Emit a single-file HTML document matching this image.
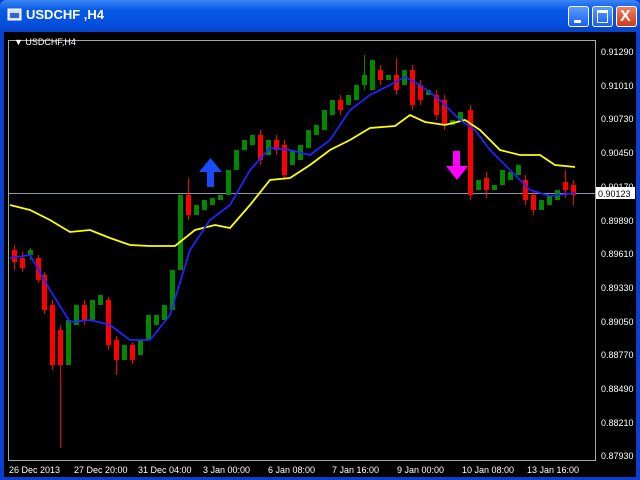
<!DOCTYPE html><html><head><style>
body{margin:0;width:640px;height:480px;overflow:hidden;background:#0a3fd0;font-family:"Liberation Sans",sans-serif}
#tb{position:absolute;left:0;top:0;width:640px;height:32px;background:linear-gradient(#3b86f5,#0a5ae6 30%,#0550e0 70%,#0444c8);border-radius:6px 6px 0 0}
#tt{position:absolute;left:26px;top:7px;color:#fff;font-weight:bold;font-size:13px}
.bt{position:absolute;top:6px;width:19px;height:19px;border:1px solid #fff;border-radius:3px;background:linear-gradient(#5a9cff,#1c5ef0)}
#main{position:absolute;left:4px;top:32px;width:632px;height:445px;background:#000}
</style></head><body>
<div id="tb"><svg style="position:absolute;left:7px;top:7px" width="16" height="16"><rect x="1" y="2" width="13" height="11" fill="#dde" stroke="#fff"/><rect x="3" y="6" width="9" height="5" fill="#36c"/></svg><div id="tt">USDCHF ,H4</div>
<div class="bt" style="left:568px"><div style="position:absolute;left:5px;top:13px;width:7px;height:3px;background:#fff"></div></div>
<div class="bt" style="left:592px"><div style="position:absolute;left:4px;top:3px;width:9px;height:9px;border:1px solid #fff;border-top-width:3px"></div></div>
<div class="bt" style="left:616px;background:linear-gradient(#f08060,#d03818)"><div style="position:absolute;left:3px;top:0;color:#fff;font-size:16px;font-weight:bold;line-height:19px">X</div></div>
</div>
<div id="main"></div>
<svg style="position:absolute;left:0;top:0" width="640" height="480" font-family="Liberation Sans" font-size="9">
<rect x="8.5" y="40.5" width="587" height="420" fill="none" stroke="#aaa"/>
<text x="14" y="45" fill="#fff" font-size="9">▼ USDCHF,H4</text>
<line x1="9" y1="193.5" x2="595" y2="193.5" stroke="#8a9aa8"/>
<g fill="#fff">
<text x="601" y="55">0.91290</text><text x="601" y="89">0.91010</text><text x="601" y="122">0.90730</text><text x="601" y="156">0.90450</text><text x="601" y="190">0.90170</text><text x="601" y="224">0.89890</text><text x="601" y="257">0.89610</text><text x="601" y="291">0.89330</text><text x="601" y="325">0.89050</text><text x="601" y="358">0.88770</text><text x="601" y="392">0.88490</text><text x="601" y="426">0.88210</text><text x="601" y="459">0.87930</text>
</g>
<rect x="596" y="187" width="39" height="12" fill="#fff"/><text x="598" y="197" fill="#000">0.90123</text>
<g fill="#fff"><text x="9" y="473">26 Dec 2013</text><text x="74" y="473">27 Dec 20:00</text><text x="138" y="473">31 Dec 04:00</text><text x="203" y="473">3 Jan 00:00</text><text x="268" y="473">6 Jan 08:00</text><text x="332" y="473">7 Jan 16:00</text><text x="397" y="473">9 Jan 00:00</text><text x="462" y="473">10 Jan 08:00</text><text x="527" y="473">13 Jan 16:00</text></g>
<g id="c"></g>
<polyline fill="none" stroke="#ff0" stroke-width="1.8" points="10,205 30,210 50,220 70,232 90,230 110,238 130,245 150,246 175,246 195,230 215,225 230,228 250,205 270,180 290,178 310,165 330,150 350,140 370,128 395,126 410,115 425,122 445,125 465,120 480,130 500,150 520,155 540,155 555,165 575,167"/>
<polyline fill="none" stroke="#22f" stroke-width="1.8" points="10,258 30,255 50,290 70,322 90,320 110,325 130,340 150,340 170,315 190,250 210,220 230,205 250,170 270,148 290,150 310,155 330,140 350,110 370,95 390,85 405,77 420,85 440,100 460,120 475,130 490,150 510,170 530,190 550,196 575,193"/>
<path d="M210.5 158 L222 172 L214 172 L214 187 L207 187 L207 172 L199 172Z" fill="#1a4cff"/>
<path d="M457 180 L468 166 L460 166 L460 151 L453 151 L453 166 L446 166Z" fill="#ff00ff"/>
</svg>
<script>
var d=[[12,250,262,245,270],[20,258,268,252,272],[28,255,250,248,260],[36,258,280,255,283],[42,275,310,272,314],[50,305,365,300,370],[58,330,365,325,448],[66,365,320,368,316],[74,325,305,328,300],[82,305,320,300,325],[90,320,300,323,296],[98,305,295,310,290],[106,300,345,297,350],[114,340,360,336,375],[122,360,345,364,340],[130,345,360,342,364],[138,355,340,358,336],[146,340,315,345,312],[154,325,315,330,310],[162,320,305,325,300],[170,310,270,315,265],[178,270,195,275,175],[186,195,215,178,220],[194,215,205,220,200],[202,210,200,215,196],[210,205,198,210,194],[218,200,195,205,190],[226,195,170,200,165],[234,170,150,175,145],[242,150,140,155,135],[250,145,135,150,128],[258,135,160,130,165],[266,155,140,160,135],[274,140,150,135,155],[282,145,175,140,180],[290,165,150,170,145],[298,160,145,165,140],[306,148,130,152,125],[314,135,125,140,120],[322,130,110,135,105],[330,115,100,120,95],[338,100,110,95,115],[346,105,95,110,90],[354,100,85,105,80],[362,85,75,55,90],[370,90,60,95,58],[378,70,80,65,85],[386,80,75,85,70],[394,75,90,58,95],[402,85,70,90,65],[410,70,105,65,110],[418,85,100,80,105],[426,95,90,100,85],[434,95,115,90,120],[442,100,125,95,130],[450,125,120,130,115],[458,122,112,128,108],[468,110,195,105,200],[476,190,180,195,175],[484,178,190,172,198],[492,190,185,198,180],[500,185,170,195,165],[508,180,172,188,168],[516,175,165,185,160],[523,180,200,175,205],[531,195,210,190,215],[539,210,200,218,195],[547,205,195,210,190],[555,200,190,205,185],[563,182,190,170,198],[571,185,195,180,205]];
var s='';d.forEach(function(c){var r=c[2]>c[1],col=r?'#f00':'#080';s+='<line x1="'+(c[0]+2.5)+'" x2="'+(c[0]+2.5)+'" y1="'+Math.min(c[3],c[1],c[2])+'" y2="'+Math.max(c[4],c[1],c[2])+'" stroke="'+col+'"/><rect x="'+c[0]+'" y="'+Math.min(c[1],c[2])+'" width="5" height="'+Math.abs(c[1]-c[2])+'" fill="'+col+'"/>';});
document.getElementById('c').innerHTML=s;
</script>
</body></html>
